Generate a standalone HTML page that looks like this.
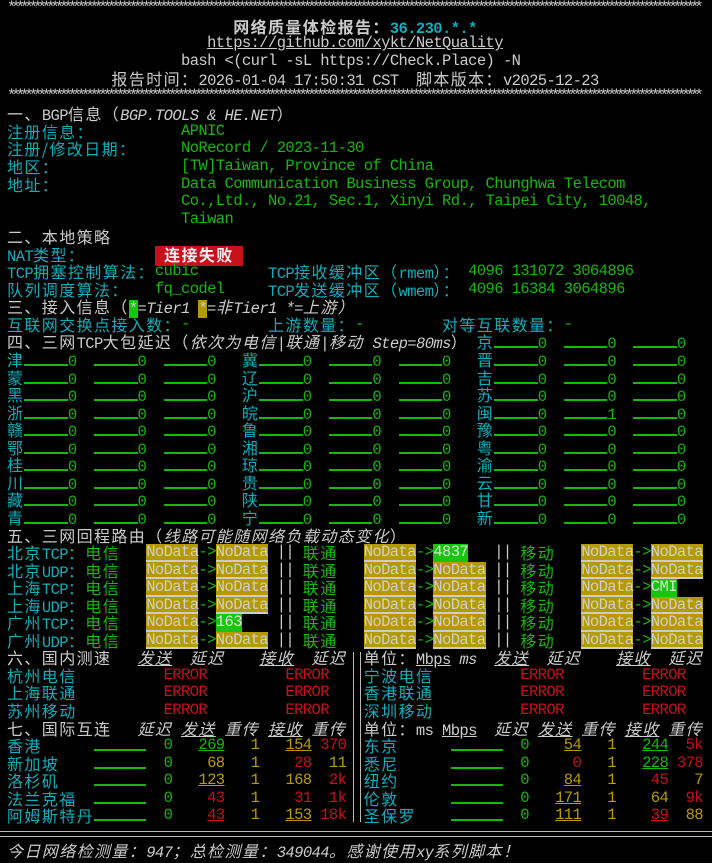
<!DOCTYPE html>
<html><head><meta charset="utf-8"><style>
body{margin:0;background:#000;width:712px;height:855px;overflow:hidden;position:relative}
.r{position:absolute;left:0;top:calc(var(--r)*17.55px);height:17.55px;width:712px}
.s{position:absolute;left:calc(7px + var(--c)*8.7px);top:0;white-space:pre;font:15.5px/17.55px "Liberation Mono","Noto Sans CJK SC",monospace;letter-spacing:-0.6px;color:#cccccc}
k{font-family:"Noto Sans CJK SC","WenQuanYi Zen Hei",sans-serif;font-size:16px;letter-spacing:1.4px;line-height:17.55px}
.c,.c k{color:#10aebb}
.g{color:#16b80c}
.y{color:#b89a00}
.rd{color:#c8101a}
.i{font-style:italic}
.u{text-decoration:underline}
.b{font-weight:bold}
b{display:inline-block;width:43.5px;height:12px;border-bottom:2.5px solid #16b80c;vertical-align:baseline}
b.w{width:52px}
.nd{background:#b49a00;color:#cfcfcf;border-bottom:2px solid #ccc;box-sizing:border-box;height:17.55px}
.gb{background:#16c60c;color:#e0e0e0}
.v{width:26.1px;text-align:right}
.hl{position:absolute;left:0;width:712px;height:1px;background:#bbb}
.vl{position:absolute;width:1px;background:#bbb}
</style></head><body>
<div class="r" style="--r:0"><span class="s" style="--c:0">********************************************************************************</span><span class="s" style="--c:0.5">*******************************************************************************</span></div>
<div class="r" style="--r:1"><span class="s b" style="--c:26"><k>网络质量体检报告：</k><span class="c">36.230.*.*</span></span></div>
<div class="r" style="--r:2"><span class="s u" style="--c:23">https://github.com/xykt/NetQuality</span></div>
<div class="r" style="--r:3"><span class="s" style="--c:20">bash &lt;(curl -sL https://Check.Place) -N</span></div>
<div class="r" style="--r:4"><span class="s" style="--c:12"><k>报告时间：</k>2026-01-04 17:50:31 CST  <k>脚本版本：</k>v2025-12-23</span></div>
<div class="r" style="--r:5"><span class="s" style="--c:0">********************************************************************************</span><span class="s" style="--c:0.5">*******************************************************************************</span></div>
<div class="r" style="--r:6"><span class="s" style="--c:0"><k>一、</k>BGP<k>信息（</k><span class="i">BGP.TOOLS &amp; HE.NET</span><k>）</k></span></div>
<div class="r" style="--r:7"><span class="s c" style="--c:0"><k>注册信息：</k></span><span class="s g" style="--c:20">APNIC</span></div>
<div class="r" style="--r:8"><span class="s c" style="--c:0"><k>注册/修改日期：</k></span><span class="s g" style="--c:20">NoRecord / 2023-11-30</span></div>
<div class="r" style="--r:9"><span class="s c" style="--c:0"><k>地区：</k></span><span class="s g" style="--c:20">[TW]Taiwan, Province of China</span></div>
<div class="r" style="--r:10"><span class="s c" style="--c:0"><k>地址：</k></span><span class="s g" style="--c:20">Data Communication Business Group, Chunghwa Telecom</span></div>
<div class="r" style="--r:11"><span class="s g" style="--c:20">Co.,Ltd., No.21, Sec.1, Xinyi Rd., Taipei City, 10048,</span></div>
<div class="r" style="--r:12"><span class="s g" style="--c:20">Taiwan</span></div>
<div class="r" style="--r:13"><span class="s" style="--c:0"><k>二、本地策略</k></span></div>
<div class="r" style="--r:14"><span class="s c" style="--c:0">NAT<k>类型：</k></span><span class="s b" style="--c:17;background:#c8101a;color:#eee;width:88px;text-align:center"><k>连接失败</k></span></div>
<div class="r" style="--r:15"><span class="s c" style="--c:0">TCP<k>拥塞控制算法：</k></span><span class="s g" style="--c:17">cubic</span><span class="s c" style="--c:30">TCP<k>接收缓冲区（</k>rmem<k>）：</k></span><span class="s g" style="--c:53">4096 131072 3064896</span></div>
<div class="r" style="--r:16"><span class="s c" style="--c:0"><k>队列调度算法：</k></span><span class="s g" style="--c:17">fq_codel</span><span class="s c" style="--c:30">TCP<k>发送缓冲区（</k>wmem<k>）：</k></span><span class="s g" style="--c:53">4096 16384 3064896</span></div>
<div class="r" style="--r:17"><span class="s" style="--c:0"><k>三、接入信息（</k><span style="background:#16c60c">*</span><span class="i">=Tier1 </span><span style="background:#b49a00">*</span><span class="i">=<k>非</k>Tier1 *=<k>上游）</k></span></span></div>
<div class="r" style="--r:18"><span class="s c" style="--c:0"><k>互联网交换点接入数：</k></span><span class="s g" style="--c:20">-</span><span class="s c" style="--c:30"><k>上游数量：</k></span><span class="s g" style="--c:40">-</span><span class="s c" style="--c:50"><k>对等互联数量：</k></span><span class="s g" style="--c:64">-</span></div>
<div class="r" style="--r:19"><span class="s" style="--c:0"><k>四、三网</k>TCP<k>大包延迟（</k><span class="i"><k>依次为电信</k>|<k>联通</k>|<k>移动</k> Step=80ms</span><k>）</k></span><span class="s g" style="--c:54"><k class="c">京</k><b></b>0  <b></b>0  <b></b>0</span></div>
<div class="r" style="--r:20"><span class="s g" style="--c:0"><k class="c">津</k><b></b>0  <b></b>0  <b></b>0</span><span class="s g" style="--c:27"><k class="c">冀</k><b></b>0  <b></b>0  <b></b>0</span><span class="s g" style="--c:54"><k class="c">晋</k><b></b>0  <b></b>0  <b></b>0</span></div>
<div class="r" style="--r:21"><span class="s g" style="--c:0"><k class="c">蒙</k><b></b>0  <b></b>0  <b></b>0</span><span class="s g" style="--c:27"><k class="c">辽</k><b></b>0  <b></b>0  <b></b>0</span><span class="s g" style="--c:54"><k class="c">吉</k><b></b>0  <b></b>0  <b></b>0</span></div>
<div class="r" style="--r:22"><span class="s g" style="--c:0"><k class="c">黑</k><b></b>0  <b></b>0  <b></b>0</span><span class="s g" style="--c:27"><k class="c">沪</k><b></b>0  <b></b>0  <b></b>0</span><span class="s g" style="--c:54"><k class="c">苏</k><b></b>0  <b></b>0  <b></b>0</span></div>
<div class="r" style="--r:23"><span class="s g" style="--c:0"><k class="c">浙</k><b></b>0  <b></b>0  <b></b>0</span><span class="s g" style="--c:27"><k class="c">皖</k><b></b>0  <b></b>0  <b></b>0</span><span class="s g" style="--c:54"><k class="c">闽</k><b></b>0  <b></b>1  <b></b>0</span></div>
<div class="r" style="--r:24"><span class="s g" style="--c:0"><k class="c">赣</k><b></b>0  <b></b>0  <b></b>0</span><span class="s g" style="--c:27"><k class="c">鲁</k><b></b>0  <b></b>0  <b></b>0</span><span class="s g" style="--c:54"><k class="c">豫</k><b></b>0  <b></b>0  <b></b>0</span></div>
<div class="r" style="--r:25"><span class="s g" style="--c:0"><k class="c">鄂</k><b></b>0  <b></b>0  <b></b>0</span><span class="s g" style="--c:27"><k class="c">湘</k><b></b>0  <b></b>0  <b></b>0</span><span class="s g" style="--c:54"><k class="c">粤</k><b></b>0  <b></b>0  <b></b>0</span></div>
<div class="r" style="--r:26"><span class="s g" style="--c:0"><k class="c">桂</k><b></b>0  <b></b>0  <b></b>0</span><span class="s g" style="--c:27"><k class="c">琼</k><b></b>0  <b></b>0  <b></b>0</span><span class="s g" style="--c:54"><k class="c">渝</k><b></b>0  <b></b>0  <b></b>0</span></div>
<div class="r" style="--r:27"><span class="s g" style="--c:0"><k class="c">川</k><b></b>0  <b></b>0  <b></b>0</span><span class="s g" style="--c:27"><k class="c">贵</k><b></b>0  <b></b>0  <b></b>0</span><span class="s g" style="--c:54"><k class="c">云</k><b></b>0  <b></b>0  <b></b>0</span></div>
<div class="r" style="--r:28"><span class="s g" style="--c:0"><k class="c">藏</k><b></b>0  <b></b>0  <b></b>0</span><span class="s g" style="--c:27"><k class="c">陕</k><b></b>0  <b></b>0  <b></b>0</span><span class="s g" style="--c:54"><k class="c">甘</k><b></b>0  <b></b>0  <b></b>0</span></div>
<div class="r" style="--r:29"><span class="s g" style="--c:0"><k class="c">青</k><b></b>0  <b></b>0  <b></b>0</span><span class="s g" style="--c:27"><k class="c">宁</k><b></b>0  <b></b>0  <b></b>0</span><span class="s g" style="--c:54"><k class="c">新</k><b></b>0  <b></b>0  <b></b>0</span></div>
<div class="r" style="--r:30"><span class="s" style="--c:0"><k>五、三网回程路由（</k><span class="i"><k>线路可能随网络负载动态变化</k></span><k>）</k></span></div>

<div class="r" style="--r:31"><span class="s c" style="--c:0"><k>北京</k>TCP<k>：</k></span><span class="s g" style="--c:9"><k>电信</k></span><span class="s nd" style="--c:16">NoData</span><span class="s g" style="--c:22">-&gt;</span><span class="s nd" style="--c:24">NoData</span><span class="s" style="--c:31">||</span><span class="s g" style="--c:34"><k>联通</k></span><span class="s nd" style="--c:41">NoData</span><span class="s g" style="--c:47">-&gt;</span><span class="s gb" style="--c:49">4837</span><span class="s" style="--c:56">||</span><span class="s g" style="--c:59"><k>移动</k></span><span class="s nd" style="--c:66">NoData</span><span class="s g" style="--c:72">-&gt;</span><span class="s nd" style="--c:74">NoData</span></div>
<div class="r" style="--r:32"><span class="s c" style="--c:0"><k>北京</k>UDP<k>：</k></span><span class="s g" style="--c:9"><k>电信</k></span><span class="s nd" style="--c:16">NoData</span><span class="s g" style="--c:22">-&gt;</span><span class="s nd" style="--c:24">NoData</span><span class="s" style="--c:31">||</span><span class="s g" style="--c:34"><k>联通</k></span><span class="s nd" style="--c:41">NoData</span><span class="s g" style="--c:47">-&gt;</span><span class="s nd" style="--c:49">NoData</span><span class="s" style="--c:56">||</span><span class="s g" style="--c:59"><k>移动</k></span><span class="s nd" style="--c:66">NoData</span><span class="s g" style="--c:72">-&gt;</span><span class="s nd" style="--c:74">NoData</span></div>
<div class="r" style="--r:33"><span class="s c" style="--c:0"><k>上海</k>TCP<k>：</k></span><span class="s g" style="--c:9"><k>电信</k></span><span class="s nd" style="--c:16">NoData</span><span class="s g" style="--c:22">-&gt;</span><span class="s nd" style="--c:24">NoData</span><span class="s" style="--c:31">||</span><span class="s g" style="--c:34"><k>联通</k></span><span class="s nd" style="--c:41">NoData</span><span class="s g" style="--c:47">-&gt;</span><span class="s nd" style="--c:49">NoData</span><span class="s" style="--c:56">||</span><span class="s g" style="--c:59"><k>移动</k></span><span class="s nd" style="--c:66">NoData</span><span class="s g" style="--c:72">-&gt;</span><span class="s gb" style="--c:74">CMI</span></div>
<div class="r" style="--r:34"><span class="s c" style="--c:0"><k>上海</k>UDP<k>：</k></span><span class="s g" style="--c:9"><k>电信</k></span><span class="s nd" style="--c:16">NoData</span><span class="s g" style="--c:22">-&gt;</span><span class="s nd" style="--c:24">NoData</span><span class="s" style="--c:31">||</span><span class="s g" style="--c:34"><k>联通</k></span><span class="s nd" style="--c:41">NoData</span><span class="s g" style="--c:47">-&gt;</span><span class="s nd" style="--c:49">NoData</span><span class="s" style="--c:56">||</span><span class="s g" style="--c:59"><k>移动</k></span><span class="s nd" style="--c:66">NoData</span><span class="s g" style="--c:72">-&gt;</span><span class="s nd" style="--c:74">NoData</span></div>
<div class="r" style="--r:35"><span class="s c" style="--c:0"><k>广州</k>TCP<k>：</k></span><span class="s g" style="--c:9"><k>电信</k></span><span class="s nd" style="--c:16">NoData</span><span class="s g" style="--c:22">-&gt;</span><span class="s gb" style="--c:24">163</span><span class="s" style="--c:31">||</span><span class="s g" style="--c:34"><k>联通</k></span><span class="s nd" style="--c:41">NoData</span><span class="s g" style="--c:47">-&gt;</span><span class="s nd" style="--c:49">NoData</span><span class="s" style="--c:56">||</span><span class="s g" style="--c:59"><k>移动</k></span><span class="s nd" style="--c:66">NoData</span><span class="s g" style="--c:72">-&gt;</span><span class="s nd" style="--c:74">NoData</span></div>
<div class="r" style="--r:36"><span class="s c" style="--c:0"><k>广州</k>UDP<k>：</k></span><span class="s g" style="--c:9"><k>电信</k></span><span class="s nd" style="--c:16">NoData</span><span class="s g" style="--c:22">-&gt;</span><span class="s nd" style="--c:24">NoData</span><span class="s" style="--c:31">||</span><span class="s g" style="--c:34"><k>联通</k></span><span class="s nd" style="--c:41">NoData</span><span class="s g" style="--c:47">-&gt;</span><span class="s nd" style="--c:49">NoData</span><span class="s" style="--c:56">||</span><span class="s g" style="--c:59"><k>移动</k></span><span class="s nd" style="--c:66">NoData</span><span class="s g" style="--c:72">-&gt;</span><span class="s nd" style="--c:74">NoData</span></div>

<div class="r" style="--r:37"><span class="s" style="--c:0"><k>六、国内测速</k></span><span class="s i u" style="--c:15"><k>发送</k></span><span class="s i" style="--c:21"><k>延迟</k></span><span class="s i u" style="--c:29"><k>接收</k></span><span class="s i" style="--c:35"><k>延迟</k></span><span class="s" style="--c:41"><k>单位：</k><span class="u">Mbps</span> <span class="i">ms</span></span><span class="s i u" style="--c:56"><k>发送</k></span><span class="s i" style="--c:62"><k>延迟</k></span><span class="s i u" style="--c:70"><k>接收</k></span><span class="s i" style="--c:76"><k>延迟</k></span></div>
<div class="r" style="--r:38"><span class="s c" style="--c:0"><k>杭州电信</k></span><span class="s rd" style="--c:18">ERROR</span><span class="s rd" style="--c:32">ERROR</span><span class="s c" style="--c:41"><k>宁波电信</k></span><span class="s rd" style="--c:59">ERROR</span><span class="s rd" style="--c:73">ERROR</span></div>
<div class="r" style="--r:39"><span class="s c" style="--c:0"><k>上海联通</k></span><span class="s rd" style="--c:18">ERROR</span><span class="s rd" style="--c:32">ERROR</span><span class="s c" style="--c:41"><k>香港联通</k></span><span class="s rd" style="--c:59">ERROR</span><span class="s rd" style="--c:73">ERROR</span></div>
<div class="r" style="--r:40"><span class="s c" style="--c:0"><k>苏州移动</k></span><span class="s rd" style="--c:18">ERROR</span><span class="s rd" style="--c:32">ERROR</span><span class="s c" style="--c:41"><k>深圳移动</k></span><span class="s rd" style="--c:59">ERROR</span><span class="s rd" style="--c:73">ERROR</span></div>
<div class="r" style="--r:41"><span class="s" style="--c:0"><k>七、国际互连</k></span><span class="s i" style="--c:15"><k>延迟</k></span><span class="s i u" style="--c:20"><k>发送</k></span><span class="s i" style="--c:25"><k>重传</k></span><span class="s i u" style="--c:30"><k>接收</k></span><span class="s i" style="--c:35"><k>重传</k></span><span class="s" style="--c:41"><k>单位：</k>ms <span class="u">Mbps</span></span><span class="s i" style="--c:56"><k>延迟</k></span><span class="s i u" style="--c:61"><k>发送</k></span><span class="s i" style="--c:66"><k>重传</k></span><span class="s i u" style="--c:71"><k>接收</k></span><span class="s i" style="--c:76"><k>重传</k></span></div>

<div class="r" style="--r:42"><span class="s c" style="--c:0"><k>香港</k></span><span class="s" style="--c:10"><b class="w"></b></span><span class="s g" style="--c:18">0</span><span class="s v g u" style="--c:22">269</span><span class="s y" style="--c:28">1</span><span class="s v y u" style="--c:32">154</span><span class="s v rd" style="--c:36">370</span><span class="s c" style="--c:41"><k>东京</k></span><span class="s" style="--c:51"><b class="w"></b></span><span class="s g" style="--c:59">0</span><span class="s v y u" style="--c:63">54</span><span class="s y" style="--c:69">1</span><span class="s v g u" style="--c:73">244</span><span class="s v rd" style="--c:77">5k</span></div>
<div class="r" style="--r:43"><span class="s c" style="--c:0"><k>新加坡</k></span><span class="s" style="--c:10"><b class="w"></b></span><span class="s g" style="--c:18">0</span><span class="s v y" style="--c:22">68</span><span class="s y" style="--c:28">1</span><span class="s v rd" style="--c:32">28</span><span class="s v y" style="--c:36">11</span><span class="s c" style="--c:41"><k>悉尼</k></span><span class="s" style="--c:51"><b class="w"></b></span><span class="s g" style="--c:59">0</span><span class="s v rd" style="--c:63">0</span><span class="s y" style="--c:69">1</span><span class="s v g u" style="--c:73">228</span><span class="s v rd" style="--c:77">378</span></div>
<div class="r" style="--r:44"><span class="s c" style="--c:0"><k>洛杉矶</k></span><span class="s" style="--c:10"><b class="w"></b></span><span class="s g" style="--c:18">0</span><span class="s v y u" style="--c:22">123</span><span class="s y" style="--c:28">1</span><span class="s v y" style="--c:32">168</span><span class="s v rd" style="--c:36">2k</span><span class="s c" style="--c:41"><k>纽约</k></span><span class="s" style="--c:51"><b class="w"></b></span><span class="s g" style="--c:59">0</span><span class="s v y u" style="--c:63">84</span><span class="s y" style="--c:69">1</span><span class="s v rd" style="--c:73">45</span><span class="s v y" style="--c:77">7</span></div>
<div class="r" style="--r:45"><span class="s c" style="--c:0"><k>法兰克福</k></span><span class="s" style="--c:10"><b class="w"></b></span><span class="s g" style="--c:18">0</span><span class="s v rd" style="--c:22">43</span><span class="s y" style="--c:28">1</span><span class="s v rd" style="--c:32">31</span><span class="s v rd" style="--c:36">1k</span><span class="s c" style="--c:41"><k>伦敦</k></span><span class="s" style="--c:51"><b class="w"></b></span><span class="s g" style="--c:59">0</span><span class="s v y u" style="--c:63">171</span><span class="s y" style="--c:69">1</span><span class="s v y" style="--c:73">64</span><span class="s v rd" style="--c:77">9k</span></div>
<div class="r" style="--r:46"><span class="s c" style="--c:0"><k>阿姆斯特丹</k></span><span class="s" style="--c:10"><b class="w"></b></span><span class="s g" style="--c:18">0</span><span class="s v rd u" style="--c:22">43</span><span class="s y" style="--c:28">1</span><span class="s v y u" style="--c:32">153</span><span class="s v rd" style="--c:36">18k</span><span class="s c" style="--c:41"><k>圣保罗</k></span><span class="s" style="--c:51"><b class="w"></b></span><span class="s g" style="--c:59">0</span><span class="s v y u" style="--c:63">111</span><span class="s y" style="--c:69">1</span><span class="s v rd u" style="--c:73">39</span><span class="s v y" style="--c:77">88</span></div>

<div class="vl" style="left:353px;top:652px;height:170px"></div>
<div class="vl" style="left:360px;top:652px;height:170px"></div>
<div class="hl" style="top:831px"></div>
<div class="hl" style="top:836px"></div>
<div class="r" style="--r:48"><span class="s i" style="--c:0"><k>今日网络检测量：</k>947<k>；总检测量：</k>349044<k>。感谢使用</k>xy<k>系列脚本！</k></span></div>
</body></html>
